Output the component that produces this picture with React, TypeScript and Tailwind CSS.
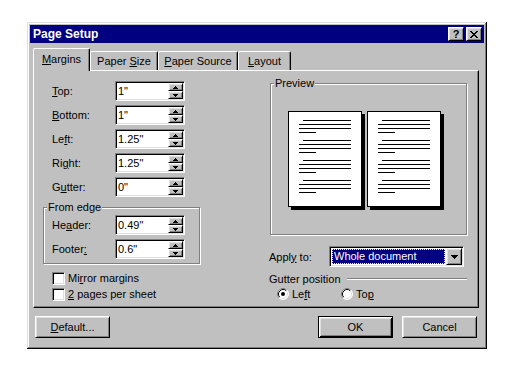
import React from "react";

const raised =
  "border border-t-white border-l-white border-r-black border-b-black shadow-[inset_1px_1px_0_#dfdfdf,inset_-1px_-1px_0_#808080]";
const sunken =
  "border border-t-[#808080] border-l-[#808080] border-r-white border-b-white shadow-[inset_1px_1px_0_#000,inset_-1px_-1px_0_#dfdfdf]";
const etched = "border border-[#808080] shadow-[inset_1px_1px_0_#fff,1px_1px_0_#fff]";

function SpinArrow({ up }: { up?: boolean }) {
  return (
    <svg width="5" height="3" viewBox="0 0 5 3" shapeRendering="crispEdges">
      {up ? (
        <path d="M2 0h1v1h1v1h1v1H0V2h1V1h1z" fill="#000" />
      ) : (
        <path d="M0 0h5v1H4v1H3v1H2V2H1V1H0z" fill="#000" />
      )}
    </svg>
  );
}

function Spin({ value }: { value: string }) {
  return (
    <div className={`flex w-[70px] h-[20px] p-[1px] bg-white ${sunken}`}>
      <div className="flex-1 pl-[1px] text-[11px] leading-[16px] text-black">{value}</div>
      <div className="flex flex-col w-[15px]">
        <div className={`h-[8px] flex items-center justify-center bg-[#c0c0c0] ${raised}`}>
          <SpinArrow up />
        </div>
        <div className={`h-[8px] flex items-center justify-center bg-[#c0c0c0] ${raised}`}>
          <SpinArrow />
        </div>
      </div>
    </div>
  );
}

function Row({ label, value, inGroup }: { label: React.ReactNode; value: string; inGroup?: boolean }) {
  return (
    <div className="flex items-center h-[20px]">
      <div className={inGroup ? "w-[71px] pl-[8px]" : "w-[72px] pl-[9px]"}>{label}</div>
      <Spin value={value} />
    </div>
  );
}

function Check({ children }: { children: React.ReactNode }) {
  return (
    <div className="flex items-center h-[16px] pl-[9px] gap-[3px]">
      <div className={`w-[13px] h-[13px] bg-white ${sunken}`} />
      <span>{children}</span>
    </div>
  );
}

function Radio({ checked }: { checked?: boolean }) {
  return (
    <svg width="12" height="12" viewBox="0 0 12 12">
      <circle cx="6" cy="6" r="5.5" fill="#fff" />
      <path d="M2.11 9.89 A5.5 5.5 0 0 1 9.89 2.11" stroke="#808080" fill="none" />
      <path d="M9.89 2.11 A5.5 5.5 0 0 1 2.11 9.89" stroke="#fff" fill="none" />
      <path d="M2.82 9.18 A4.5 4.5 0 0 1 9.18 2.82" stroke="#000" fill="none" />
      <path d="M9.18 2.82 A4.5 4.5 0 0 1 2.82 9.18" stroke="#dfdfdf" fill="none" />
      {checked && <circle cx="6" cy="6" r="2" fill="#000" />}
    </svg>
  );
}

function PageLines() {
  return (
    <div className="flex flex-col gap-[3px]">
      <div className="ml-[4px] w-[48px] h-[1px] bg-black" />
      <div className="w-[52px] h-[1px] bg-black" />
      <div className="w-[52px] h-[1px] bg-black" />
      <div className="w-[17px] h-[1px] bg-black" />
    </div>
  );
}

function Page() {
  return (
    <div className="w-[74px] h-[96px] bg-white border border-black shadow-[3px_3px_0_#000] pt-[8px] pl-[10px] flex flex-col gap-[7px]">
      <PageLines />
      <PageLines />
      <PageLines />
      <PageLines />
    </div>
  );
}

function Tab({ children, w }: { children: React.ReactNode; w: string }) {
  return (
    <div
      className={`${w} h-[19px] bg-[#c0c0c0] border-l border-t border-r border-l-white border-t-white border-r-black rounded-t-[2px] shadow-[inset_-1px_0_0_#808080] flex items-center justify-center`}
    >
      {children}
    </div>
  );
}

function Btn({ children, def }: { children: React.ReactNode; def?: boolean }) {
  return (
    <div
      className={
        def
          ? "w-[75px] h-[22px] flex items-center justify-center bg-[#c0c0c0] border border-black shadow-[inset_1px_1px_0_#fff,inset_-1px_-1px_0_#000,inset_2px_2px_0_#dfdfdf,inset_-2px_-2px_0_#808080]"
          : `w-[75px] h-[22px] flex items-center justify-center bg-[#c0c0c0] ${raised}`
      }
    >
      {children}
    </div>
  );
}

export default function App() {
  return (
    <div className="w-[507px] h-[366px] bg-white pt-[22px] pl-[27px] font-['Liberation_Sans',Arial,sans-serif] text-[11px] leading-[14px] text-black">
      <div className="w-[460px] h-[327px] bg-[#c0c0c0] p-[3px] shadow-[inset_-1px_-1px_0_#000,inset_1px_1px_0_#dfdfdf,inset_-2px_-2px_0_#808080,inset_2px_2px_0_#fff]">
        {/* Title bar */}
        <div className="flex items-center h-[18px] bg-[#000080] pl-[3px] pr-[2px]">
          <span className="text-white font-bold text-[12px] leading-[18px]">Page Setup</span>
          <div className="ml-auto flex gap-[2px]">
            <div className={`w-[16px] h-[14px] flex items-center justify-center bg-[#c0c0c0] ${raised}`}>
              <span className="font-bold text-[11px] leading-[12px]">?</span>
            </div>
            <div className={`w-[16px] h-[14px] flex items-center justify-center bg-[#c0c0c0] ${raised}`}>
              <svg width="8" height="7" viewBox="0 0 8 7" shapeRendering="crispEdges" fill="#000">
                <rect x="0" y="0" width="2" height="1" />
                <rect x="6" y="0" width="2" height="1" />
                <rect x="1" y="1" width="2" height="1" />
                <rect x="5" y="1" width="2" height="1" />
                <rect x="2" y="2" width="4" height="1" />
                <rect x="3" y="3" width="2" height="1" />
                <rect x="2" y="4" width="4" height="1" />
                <rect x="1" y="5" width="2" height="1" />
                <rect x="5" y="5" width="2" height="1" />
                <rect x="0" y="6" width="2" height="1" />
                <rect x="6" y="6" width="2" height="1" />
              </svg>
            </div>
          </div>
        </div>

        <div className="pl-[3px] pt-[5px]">
          {/* Tabs */}
          <div className="flex items-end h-[22px]">
            <div className="relative z-10 w-[57px] h-[23px] -mb-[1px] bg-[#c0c0c0] border-l border-t border-r border-l-white border-t-white border-r-black rounded-t-[2px] shadow-[inset_-1px_0_0_#808080] flex items-center justify-center pb-[2px]">
              <span>
                <span className="underline">M</span>argins
              </span>
            </div>
            <Tab w="w-[68px]">
              <span>
                Paper <span className="underline">S</span>ize
              </span>
            </Tab>
            <Tab w="w-[80px]">
              <span>
                <span className="underline">P</span>aper Source
              </span>
            </Tab>
            <Tab w="w-[53px]">
              <span>
                <span className="underline">L</span>ayout
              </span>
            </Tab>
          </div>

          {/* Panel */}
          <div className="flex w-[446px] h-[238px] bg-[#c0c0c0] border border-t-white border-l-white border-r-black border-b-black shadow-[inset_-1px_-1px_0_#808080] pl-[9px] pt-[10px]">
            {/* Left column */}
            <div className="flex flex-col w-[157px]">
              <div className="flex flex-col gap-[4px]">
                <Row label={<><span className="underline">T</span>op:</>} value={'1"'} />
                <Row label={<><span className="underline">B</span>ottom:</>} value={'1"'} />
                <Row label={<>Le<span className="underline">f</span>t:</>} value={'1.25"'} />
                <Row label={<>Ri<span className="underline">g</span>ht:</>} value={'1.25"'} />
                <Row label={<>G<span className="underline">u</span>tter:</>} value={'0"'} />
              </div>
              <div className={`relative mt-[10px] w-[157px] pt-[7px] pb-[4px] flex flex-col gap-[4px] ${etched}`}>
                <span className="absolute -top-[8px] left-[3px] px-[1px] bg-[#c0c0c0]">From edge</span>
                <Row inGroup label={<>He<span className="underline">a</span>der:</>} value={'0.49"'} />
                <Row inGroup label={<>Footer<span className="underline">:</span></>} value={'0.6"'} />
              </div>
              <div className="mt-[6px] flex flex-col">
                <Check>
                  Mi<span className="underline">r</span>ror margins
                </Check>
                <Check>
                  <span className="underline">2</span> pages per sheet
                </Check>
              </div>
            </div>

            {/* Right column */}
            <div className="ml-[69px] w-[198px] flex flex-col">
              <div className={`relative mt-[2px] ml-[1px] w-[197px] h-[152px] pt-[27px] pl-[17px] flex gap-[5px] ${etched}`}>
                <span className="absolute -top-[8px] left-[3px] px-[1px] bg-[#c0c0c0]">Preview</span>
                <Page />
                <Page />
              </div>
              <div className="mt-[11px] flex items-center h-[21px]">
                <span className="w-[60px]">
                  Appl<span className="underline">y</span> to:
                </span>
                <div className={`flex w-[135px] h-[21px] p-[1px] bg-white ${sunken}`}>
                  <div className="flex-1 p-[1px]">
                    <div className="h-full bg-[#000080] border border-dotted border-[#ffff80] text-white pl-[1px] leading-[13px]">
                      Whole document
                    </div>
                  </div>
                  <div className={`w-[16px] flex items-center justify-center bg-[#c0c0c0] ${raised}`}>
                    <svg width="7" height="4" viewBox="0 0 7 4" shapeRendering="crispEdges">
                      <path d="M0 0h7v1H6v1H5v1H4v1H3V3H2V2H1V1H0z" fill="#000" />
                    </svg>
                  </div>
                </div>
              </div>
              <div className="mt-[5px] flex items-center h-[14px]">
                <span>Gutter position</span>
                <div className="ml-[6px] flex-1 border-t border-t-[#808080] border-b border-b-white" />
              </div>
              <div className="mt-[1px] flex items-center h-[14px] pl-[8px]">
                <div className="w-[64px] flex items-center gap-[3px]">
                  <Radio checked />
                  <span>
                    Le<span className="underline">f</span>t
                  </span>
                </div>
                <div className="flex items-center gap-[3px]">
                  <Radio />
                  <span>
                    To<span className="underline">p</span>
                  </span>
                </div>
              </div>
            </div>
          </div>

          {/* Buttons */}
          <div className="flex w-[446px] mt-[8px] px-[2px]">
            <Btn>
              <span>
                <span className="underline">D</span>efault...
              </span>
            </Btn>
            <div className="ml-auto flex gap-[9px]">
              <Btn def>OK</Btn>
              <Btn>Cancel</Btn>
            </div>
          </div>
        </div>
      </div>
    </div>
  );
}
